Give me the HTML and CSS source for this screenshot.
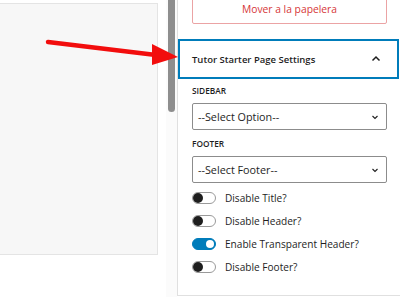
FILE: index.html
```html
<!DOCTYPE html>
<html>
<head>
    <title>Tutor Starter Page Settings</title>
    <meta name="viewport" content="width=device-width, initial-scale=1.0">
    <link rel="stylesheet" href="styles.css">
</head>
<body>
    <div class="page">
        <div class="canvas-area">
            <div class="preview"></div>
        </div>

        <div class="scroll-track">
            <div class="scroll-thumb"></div>
        </div>

        <div class="sidebar">
            <div class="trash-wrap">
                <button class="trash-btn">Mover a la papelera</button>
            </div>

            <div class="panel-header">
                <span class="panel-title">Tutor Starter Page Settings</span>
                <svg class="chevron" width="12" height="12" viewBox="0 0 12 12">
                    <path d="M2.5 7.5 L6 4 L9.5 7.5" fill="none" stroke="#1e1e1e" stroke-width="1.5"/>
                </svg>
            </div>

            <div class="panel-body">
                <div class="field-label">SIDEBAR</div>
                <div class="select-box">
                    <span>--Select Option--</span>
                    <svg width="10" height="10" viewBox="0 0 10 10">
                        <path d="M2.5 4 L5 6.5 L7.5 4" fill="none" stroke="#1e1e1e" stroke-width="1.1"/>
                    </svg>
                </div>

                <div class="field-label footer-label">FOOTER</div>
                <div class="select-box">
                    <span>--Select Footer--</span>
                    <svg width="10" height="10" viewBox="0 0 10 10">
                        <path d="M2.5 4 L5 6.5 L7.5 4" fill="none" stroke="#1e1e1e" stroke-width="1.1"/>
                    </svg>
                </div>

                <div class="toggles">
                    <div class="toggle-row">
                        <span class="toggle"></span>
                        <span>Disable Title?</span>
                    </div>
                    <div class="toggle-row">
                        <span class="toggle"></span>
                        <span>Disable Header?</span>
                    </div>
                    <div class="toggle-row">
                        <span class="toggle is-on"></span>
                        <span>Enable Transparent Header?</span>
                    </div>
                    <div class="toggle-row">
                        <span class="toggle"></span>
                        <span>Disable Footer?</span>
                    </div>
                </div>
            </div>
        </div>
    </div>

    <!-- annotation arrow pointing at the panel -->
    <svg class="arrow" width="400" height="297" viewBox="0 0 400 297">
        <line x1="48" y1="42" x2="156" y2="55" stroke="#f20d0d" stroke-width="4.5" stroke-linecap="round"/>
        <polygon points="152,44 178,57 152,65" fill="#f20d0d"/>
    </svg>
</body>
</html>
```

FILE: styles.css
```css
body {
    font-family: "Open Sans", "Noto Sans", sans-serif;
    background-color: white;
    color: #1e1e1e;
    margin: 0;
    padding: 0;
    overflow: hidden;
}
.page {
    display: flex;
    height: 297px;
}
.canvas-area {
    width: 166px;
}
.preview {
    margin-top: 3px;
    width: 157px;
    height: 250px;
    background-color: #f7f7f7;
    border: 1px solid #e4e4e4;
    border-left: none;
}
.scroll-track {
    width: 11px;
    background-color: #fbfbfb;
}
.scroll-thumb {
    margin-left: 2px;
    width: 7px;
    height: 112px;
    background-color: #8e8e8e;
    border-radius: 0 0 4px 4px;
}
.sidebar {
    flex: 1;
    height: 295px;
    border-left: 1px solid #e0e0e0;
    border-bottom: 1px solid #e0e0e0;
    display: flex;
    flex-direction: column;
}
.trash-wrap {
    padding: 0 13px 0 14px;
}
.trash-btn {
    display: block;
    width: 100%;
    height: 32px;
    margin-top: -8px;
    padding-top: 2px;
    background-color: white;
    border: 1px solid #eba3a4;
    border-radius: 2px;
    color: #d63638;
    font-family: "Open Sans", "Noto Sans", sans-serif;
    font-size: 10.3px;
}
.panel-header {
    margin-top: 15px;
    margin-right: 1px;
    height: 36px;
    border: 2px solid #007cba;
    display: flex;
    align-items: center;
    justify-content: space-between;
    padding: 0 15px 0 12px;
}
.panel-title {
    font-size: 9.5px;
    font-weight: 600;
}
.chevron {
    margin-top: -1px;
}
.panel-body {
    padding: 0 13px 0 14px;
}
.field-label {
    margin-top: 6px;
    height: 12px;
    line-height: 12px;
    font-size: 8.3px;
    font-weight: 600;
}
.footer-label {
    margin-top: 8px;
}
.select-box {
    margin-top: 6px;
    height: 25px;
    border: 1px solid #8c8c8c;
    border-radius: 2px;
    display: flex;
    align-items: center;
    justify-content: space-between;
    padding: 0 6px 0 5px;
    font-size: 10.8px;
}
.toggles {
    margin-top: 9px;
    display: flex;
    flex-direction: column;
    gap: 11px;
}
.toggle-row {
    display: flex;
    align-items: center;
    gap: 9px;
    height: 12px;
    font-size: 10.1px;
}
.toggle {
    position: relative;
    box-sizing: border-box;
    width: 24px;
    height: 12px;
    border: 1px solid #9a9a9a;
    border-radius: 6px;
    background-color: white;
}
.toggle::after {
    content: "";
    position: absolute;
    left: 0;
    top: 0;
    width: 10px;
    height: 10px;
    border-radius: 50%;
    background-color: #1e1e1e;
}
.toggle.is-on {
    background-color: #007cba;
    border-color: #007cba;
}
.toggle.is-on::after {
    left: 13px;
    top: 1px;
    width: 8px;
    height: 8px;
    background-color: white;
}
.arrow {
    position: absolute;
    left: 0;
    top: 0;
    pointer-events: none;
}
```
